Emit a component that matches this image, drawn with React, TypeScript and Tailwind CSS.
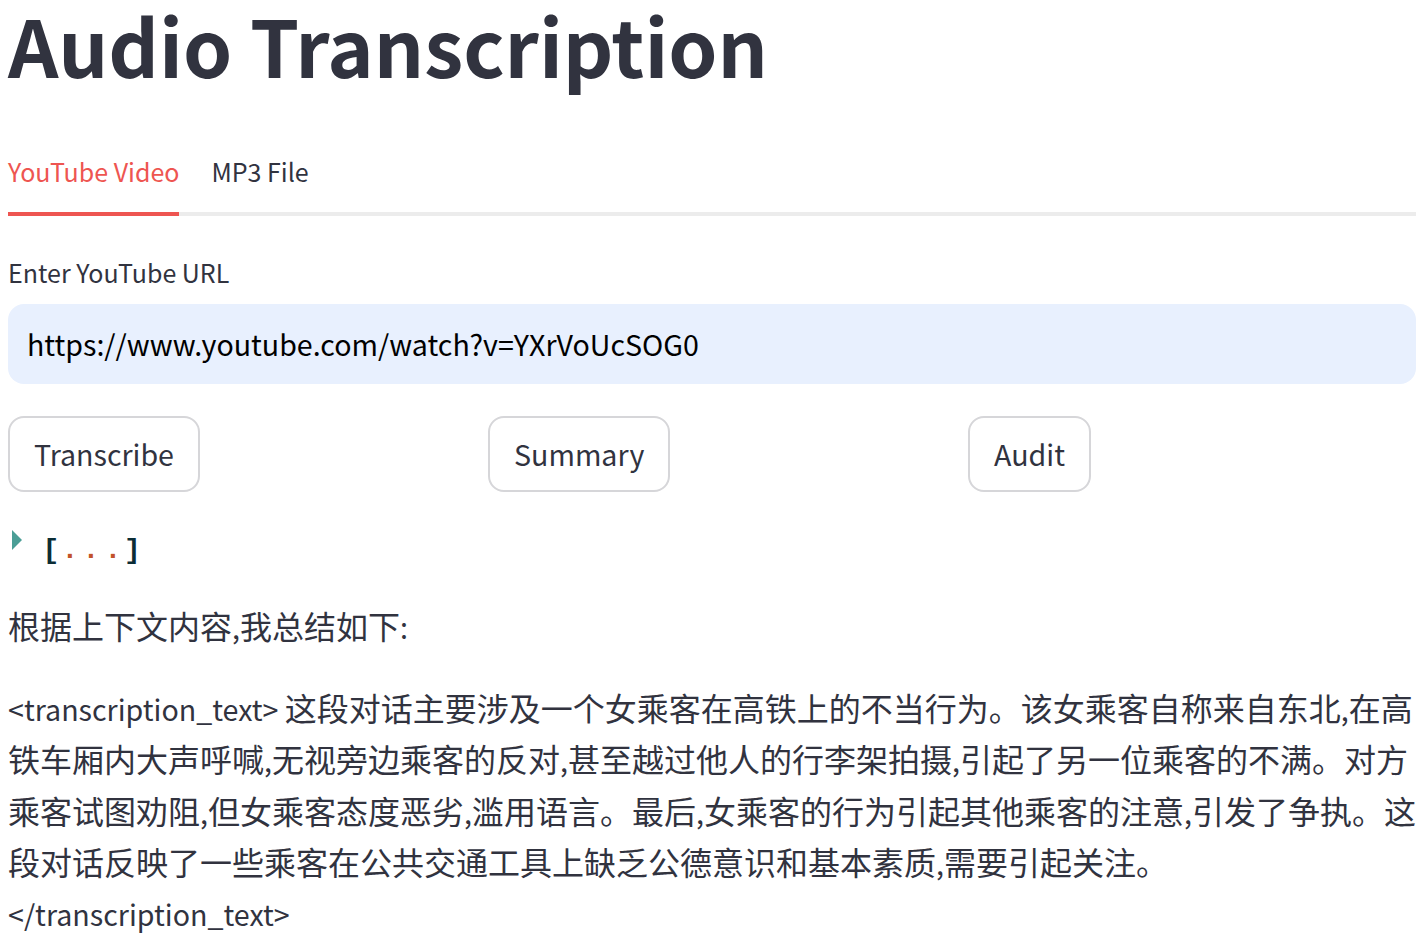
import React from "react";

const font = { fontFamily: '"Noto Sans CJK SC", "Noto Sans", sans-serif' };

// Latin runs in the CJK font come out larger than the reference's Latin face,
// so shrink the ASCII runs a little.
function Mixed({ text }: { text: string }) {
  const parts = text.match(/[\x20-\x7e]+|[^\x20-\x7e]+/g) ?? [];
  return (
    <>
      {parts.map((p, i) =>
        /^[\x20-\x7e]+$/.test(p) ? (
          <span key={i} className="text-[0.895em]">
            {p}
          </span>
        ) : (
          <React.Fragment key={i}>{p}</React.Fragment>
        )
      )}
    </>
  );
}

function Tabs() {
  const tabs = ["YouTube Video", "MP3 File"];
  return (
    <div className="flex gap-8 border-b-4 border-[#ececec]">
      {tabs.map((t, i) => (
        <div
          key={t}
          className={`-mb-1 flex h-[86px] items-center border-b-4 text-[25px] leading-none ${
            i === 0 ? "border-[#ee5551] text-[#ee5551]" : "border-transparent text-[#31333f]"
          }`}
        >
          {t}
        </div>
      ))}
    </div>
  );
}

function JsonCollapsed() {
  return (
    <div className="mt-[32px] flex h-[40px] items-start">
      <svg width="10" height="20" viewBox="0 0 10 20" className="ml-1 mt-[6px]">
        <path d="M0 0 L10 10 L0 20 Z" fill="#4b9e96" />
      </svg>
      <div
        className="ml-[20px] mt-[11px] flex text-[28px] font-bold leading-[32px] text-[#0b2d35]"
        style={{ fontFamily: '"Liberation Mono", monospace' }}
      >
        <span className="w-[18px] text-center">[</span>
        <span className="w-[20px] text-center text-[#c2522a]">.</span>
        <span className="w-[22px] text-center text-[#c2522a]">.</span>
        <span className="w-[22px] text-center text-[#c2522a]">.</span>
        <span className="w-[14px] text-center">]</span>
      </div>
    </div>
  );
}

export default function App() {
  const buttons = ["Transcribe", "Summary", "Audit"];
  return (
    <main className="w-[1428px] bg-white pl-2 pr-3 text-[#31333f]" style={font}>
      <h1 className="h-[130px] pt-[1px] text-[78.7px] font-bold leading-[86px]">Audio Transcription</h1>

      <Tabs />

      <label className="mt-[36px] block text-[25px] leading-[40px]">Enter YouTube URL</label>
      <div className="mt-[12px] flex h-[80px] items-center rounded-[16px] bg-[#e8f0fe] px-[19px] text-[28.6px] text-black">
        https://www.youtube.com/watch?v=YXrVoUcSOG0
      </div>

      <div className="mt-[32px] grid grid-cols-3 gap-8">
        {buttons.map((b) => (
          <div key={b}>
            <button className="h-[76px] rounded-[16px] border-2 border-[#d6d6d9] bg-white px-[24px] text-[28.6px] text-[#31333f]">
              {b}
            </button>
          </div>
        ))}
      </div>

      <JsonCollapsed />

      <div className="mt-[36px] text-[32px] leading-[1.6]">
        <p className="mb-[31px]">
          <Mixed text="根据上下文内容,我总结如下:" />
        </p>
        <p>
          <Mixed text="<transcription_text> 这段对话主要涉及一个女乘客在高铁上的不当行为。该女乘客自称来自东北,在高铁车厢内大声呼喊,无视旁边乘客的反对,甚至越过他人的行李架拍摄,引起了另一位乘客的不满。对方乘客试图劝阻,但女乘客态度恶劣,滥用语言。最后,女乘客的行为引起其他乘客的注意,引发了争执。这段对话反映了一些乘客在公共交通工具上缺乏公德意识和基本素质,需要引起关注。 </transcription_text>" />
        </p>
      </div>
    </main>
  );
}
